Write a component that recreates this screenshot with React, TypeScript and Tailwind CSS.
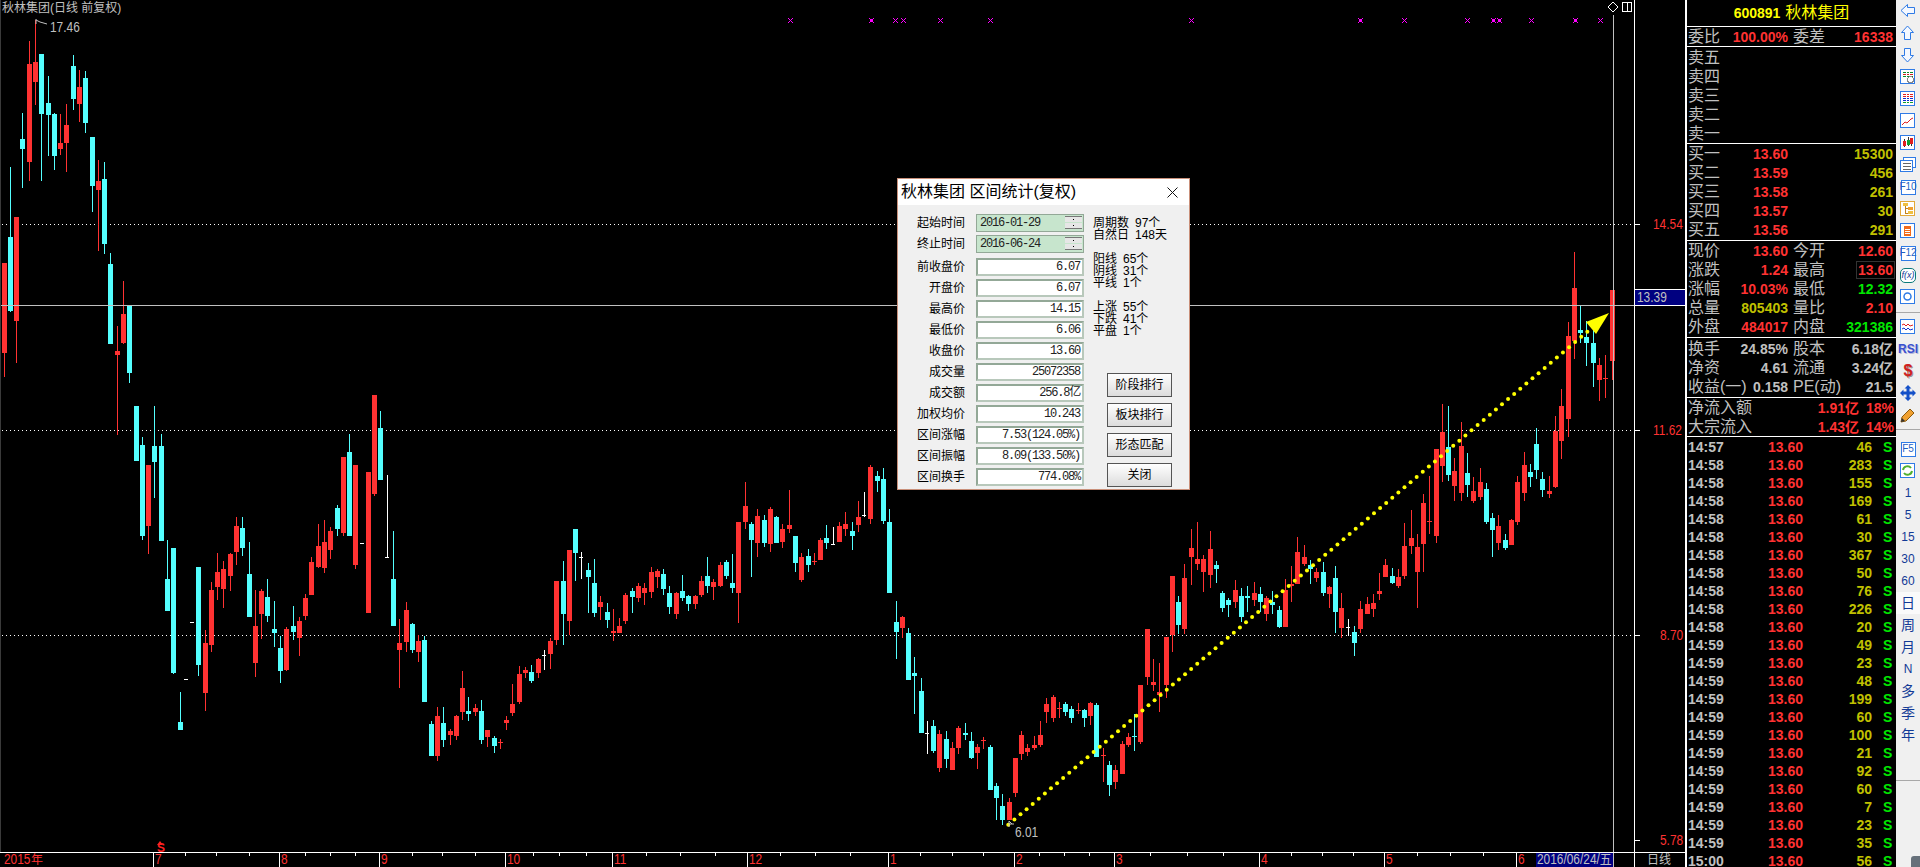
import React from 'react';

type Candle = [number, number, number, number, number, 'r' | 'c' | 'w'];

// x, body top, body bottom, wick top, wick bottom, colour
const CANDLES: Candle[] = [
  [2, 263, 353, 263, 377, 'r'], [8, 237, 311, 167, 312, 'c'], [14, 217, 321, 217, 363, 'r'], [20, 139, 149, 113, 188, 'c'],
  [27, 64, 162, 41, 181, 'r'], [33, 62, 82, 20, 105, 'r'], [39, 54, 114, 54, 181, 'c'], [46, 103, 115, 76, 156, 'c'],
  [52, 114, 156, 113, 170, 'c'], [58, 143, 149, 114, 155, 'r'], [64, 125, 143, 104, 172, 'r'], [71, 66, 99, 55, 110, 'c'],
  [77, 87, 104, 70, 122, 'r'], [83, 78, 123, 71, 133, 'c'], [90, 137, 186, 137, 212, 'c'], [96, 181, 190, 160, 251, 'r'],
  [102, 179, 244, 162, 254, 'c'], [108, 264, 344, 253, 344, 'c'], [115, 351, 355, 326, 435, 'r'], [121, 314, 343, 281, 344, 'r'],
  [127, 306, 373, 306, 383, 'c'], [134, 406, 461, 406, 461, 'c'], [140, 445, 536, 437, 540, 'c'], [146, 465, 526, 465, 554, 'r'],
  [152, 446, 462, 406, 498, 'c'], [159, 446, 541, 434, 541, 'c'], [165, 579, 611, 540, 611, 'c'], [171, 548, 673, 548, 674, 'c'],
  [178, 722, 730, 692, 730, 'c'], [184, 679, 679, 679, 679, 'w'], [190, 622, 622, 622, 622, 'w'], [196, 567, 665, 567, 676, 'c'],
  [203, 643, 693, 630, 711, 'r'], [209, 590, 645, 582, 652, 'r'], [215, 572, 587, 553, 600, 'r'], [221, 569, 589, 561, 608, 'r'],
  [228, 554, 576, 553, 591, 'r'], [234, 526, 552, 517, 565, 'r'], [240, 528, 548, 517, 556, 'c'], [247, 574, 617, 542, 617, 'c'],
  [253, 626, 663, 590, 677, 'r'], [259, 591, 614, 589, 639, 'r'], [265, 597, 616, 579, 622, 'c'], [272, 629, 633, 601, 647, 'c'],
  [278, 648, 671, 636, 683, 'c'], [284, 629, 670, 627, 671, 'r'], [291, 626, 632, 606, 640, 'c'], [297, 621, 638, 617, 656, 'r'],
  [303, 598, 616, 594, 620, 'r'], [309, 562, 595, 557, 595, 'r'], [316, 546, 567, 524, 568, 'r'], [322, 542, 568, 520, 573, 'r'],
  [328, 531, 550, 527, 559, 'r'], [335, 508, 529, 505, 536, 'c'], [341, 457, 533, 457, 536, 'r'], [347, 452, 536, 434, 536, 'c'],
  [353, 465, 565, 465, 569, 'r'], [360, 543, 543, 543, 543, 'w'], [366, 472, 613, 472, 613, 'r'], [372, 395, 494, 395, 496, 'r'],
  [378, 428, 480, 411, 480, 'c'], [385, 557, 557, 475, 557, 'w'], [391, 579, 626, 531, 626, 'c'], [397, 643, 650, 619, 688, 'r'],
  [404, 610, 642, 602, 652, 'r'], [410, 624, 650, 623, 653, 'c'], [416, 641, 652, 635, 662, 'r'], [422, 640, 702, 636, 702, 'c'],
  [429, 724, 756, 721, 756, 'c'], [435, 716, 756, 707, 761, 'r'], [441, 723, 740, 707, 747, 'c'], [448, 731, 735, 729, 745, 'r'],
  [454, 716, 736, 715, 740, 'r'], [460, 688, 712, 671, 720, 'r'], [466, 711, 714, 697, 721, 'c'], [473, 708, 712, 704, 716, 'r'],
  [479, 711, 740, 700, 744, 'c'], [485, 730, 737, 730, 747, 'r'], [492, 738, 746, 736, 753, 'c'], [498, 742, 742, 739, 749, 'r'],
  [504, 720, 723, 716, 730, 'r'], [510, 704, 713, 684, 716, 'r'], [517, 674, 702, 666, 704, 'r'], [523, 670, 673, 667, 678, 'r'],
  [529, 672, 681, 665, 683, 'c'], [536, 659, 673, 658, 678, 'r'], [542, 655, 655, 650, 670, 'w'], [548, 641, 654, 638, 669, 'r'],
  [554, 581, 640, 581, 645, 'r'], [561, 581, 614, 561, 645, 'c'], [567, 550, 621, 550, 635, 'r'], [573, 529, 553, 529, 581, 'c'],
  [579, 557, 557, 552, 579, 'w'], [586, 570, 577, 563, 613, 'c'], [592, 583, 613, 559, 617, 'c'], [598, 602, 607, 596, 620, 'r'],
  [605, 612, 620, 603, 628, 'c'], [611, 631, 633, 609, 641, 'r'], [617, 626, 633, 618, 633, 'r'], [623, 595, 621, 593, 624, 'r'],
  [630, 591, 597, 588, 613, 'c'], [636, 586, 598, 583, 602, 'r'], [642, 588, 593, 583, 605, 'r'], [649, 572, 592, 567, 598, 'r'],
  [655, 571, 577, 569, 588, 'r'], [661, 574, 589, 569, 595, 'c'], [667, 593, 607, 586, 614, 'c'], [674, 593, 614, 592, 619, 'r'],
  [680, 591, 598, 575, 601, 'c'], [686, 596, 604, 595, 611, 'c'], [693, 596, 604, 595, 609, 'r'], [699, 581, 595, 576, 597, 'r'],
  [705, 576, 586, 557, 593, 'c'], [711, 582, 587, 579, 600, 'r'], [718, 565, 586, 562, 587, 'r'], [724, 562, 576, 560, 579, 'c'],
  [730, 583, 588, 554, 593, 'c'], [736, 522, 593, 522, 623, 'r'], [743, 506, 522, 482, 529, 'r'], [749, 524, 540, 522, 577, 'c'],
  [755, 516, 543, 509, 557, 'r'], [762, 520, 543, 515, 547, 'c'], [768, 509, 544, 507, 552, 'r'], [774, 517, 543, 516, 543, 'c'],
  [780, 529, 542, 524, 548, 'r'], [787, 525, 529, 490, 533, 'r'], [793, 536, 563, 536, 572, 'c'], [799, 557, 580, 553, 582, 'r'],
  [806, 556, 565, 549, 572, 'c'], [812, 561, 561, 553, 565, 'r'], [818, 540, 560, 538, 560, 'r'], [824, 538, 543, 525, 549, 'c'],
  [831, 544, 544, 527, 544, 'w'], [837, 526, 542, 522, 542, 'r'], [843, 524, 529, 512, 536, 'r'], [850, 531, 536, 522, 550, 'c'],
  [856, 517, 525, 501, 532, 'r'], [862, 515, 515, 492, 517, 'w'], [868, 467, 519, 465, 524, 'r'], [875, 476, 481, 471, 492, 'c'],
  [881, 479, 521, 468, 524, 'c'], [887, 522, 593, 509, 593, 'c'], [894, 622, 632, 601, 659, 'c'], [900, 617, 628, 616, 638, 'r'],
  [906, 633, 680, 628, 680, 'c'], [912, 673, 676, 657, 714, 'c'], [919, 691, 733, 678, 733, 'c'], [925, 733, 733, 721, 754, 'w'],
  [931, 726, 751, 720, 753, 'c'], [937, 734, 768, 730, 772, 'r'], [944, 739, 759, 731, 768, 'c'], [950, 748, 770, 742, 770, 'r'],
  [956, 728, 748, 726, 754, 'r'], [963, 733, 735, 723, 740, 'c'], [969, 741, 758, 732, 759, 'c'], [975, 747, 753, 744, 769, 'r'],
  [981, 740, 740, 737, 749, 'r'], [988, 747, 790, 745, 790, 'c'], [994, 786, 798, 783, 820, 'c'], [1000, 806, 820, 794, 825, 'c'],
  [1007, 802, 820, 798, 820, 'r'], [1013, 758, 793, 758, 797, 'r'], [1019, 735, 754, 731, 760, 'r'], [1025, 748, 752, 744, 756, 'r'],
  [1032, 745, 748, 736, 750, 'r'], [1038, 735, 745, 721, 747, 'r'], [1044, 704, 712, 698, 723, 'r'], [1051, 697, 718, 695, 722, 'r'],
  [1057, 708, 708, 702, 718, 'r'], [1063, 704, 712, 702, 716, 'c'], [1069, 709, 718, 706, 723, 'c'], [1076, 710, 710, 703, 714, 'r'],
  [1082, 710, 718, 709, 727, 'c'], [1088, 703, 716, 702, 725, 'r'], [1094, 705, 757, 703, 757, 'c'], [1101, 755, 755, 748, 782, 'r'],
  [1107, 765, 785, 761, 796, 'c'], [1113, 770, 782, 765, 789, 'r'], [1120, 744, 774, 741, 774, 'r'], [1126, 737, 745, 733, 747, 'r'],
  [1132, 736, 736, 714, 751, 'c'], [1138, 685, 742, 685, 744, 'r'], [1145, 629, 677, 629, 685, 'r'], [1151, 682, 685, 659, 691, 'r'],
  [1157, 692, 695, 663, 712, 'r'], [1164, 637, 685, 637, 698, 'r'], [1170, 576, 635, 576, 652, 'r'], [1176, 602, 625, 596, 634, 'c'],
  [1182, 578, 629, 564, 634, 'r'], [1189, 548, 557, 529, 585, 'r'], [1195, 559, 564, 522, 570, 'r'], [1201, 559, 572, 555, 592, 'r'],
  [1208, 549, 575, 531, 588, 'r'], [1214, 565, 569, 561, 583, 'c'], [1220, 593, 608, 591, 612, 'c'], [1226, 600, 605, 598, 617, 'c'],
  [1233, 590, 602, 580, 608, 'r'], [1239, 596, 617, 588, 622, 'c'], [1245, 596, 598, 586, 612, 'c'], [1252, 593, 600, 582, 606, 'r'],
  [1258, 594, 602, 587, 612, 'c'], [1264, 598, 614, 596, 621, 'r'], [1270, 602, 605, 591, 614, 'c'], [1277, 610, 627, 606, 628, 'c'],
  [1283, 590, 627, 579, 627, 'r'], [1289, 584, 586, 566, 602, 'r'], [1295, 552, 584, 537, 584, 'r'], [1302, 557, 564, 545, 566, 'r'],
  [1308, 565, 569, 560, 584, 'c'], [1314, 572, 578, 568, 582, 'r'], [1321, 572, 593, 562, 596, 'c'], [1327, 587, 594, 586, 608, 'r'],
  [1333, 578, 612, 566, 633, 'c'], [1339, 608, 628, 593, 638, 'r'], [1346, 627, 627, 619, 636, 'w'], [1352, 632, 643, 626, 656, 'c'],
  [1358, 609, 629, 601, 633, 'r'], [1365, 604, 614, 597, 614, 'r'], [1371, 603, 609, 594, 617, 'r'], [1377, 591, 594, 573, 600, 'r'],
  [1383, 565, 577, 559, 577, 'r'], [1390, 576, 583, 568, 584, 'c'], [1396, 577, 586, 569, 588, 'r'], [1402, 546, 576, 523, 579, 'r'],
  [1409, 538, 546, 510, 554, 'r'], [1415, 547, 572, 534, 608, 'r'], [1421, 503, 544, 494, 572, 'r'], [1427, 521, 521, 476, 534, 'r'],
  [1434, 449, 536, 449, 543, 'r'], [1440, 432, 466, 404, 482, 'r'], [1446, 447, 475, 406, 481, 'c'], [1452, 471, 486, 458, 501, 'r'],
  [1459, 446, 493, 422, 501, 'r'], [1465, 473, 485, 453, 497, 'c'], [1471, 491, 501, 477, 503, 'r'], [1478, 482, 497, 468, 500, 'r'],
  [1484, 489, 522, 483, 524, 'c'], [1490, 518, 530, 513, 557, 'c'], [1496, 526, 543, 515, 550, 'r'], [1503, 540, 548, 534, 550, 'c'],
  [1509, 520, 545, 519, 545, 'r'], [1515, 482, 522, 476, 525, 'r'], [1522, 465, 493, 452, 501, 'r'], [1528, 472, 477, 464, 487, 'c'],
  [1534, 444, 470, 428, 479, 'c'], [1540, 479, 490, 472, 497, 'c'], [1547, 491, 494, 476, 498, 'r'], [1553, 431, 487, 416, 488, 'r'],
  [1559, 406, 441, 389, 459, 'r'], [1566, 336, 419, 322, 437, 'r'], [1572, 288, 341, 252, 359, 'r'], [1578, 330, 333, 306, 343, 'c'],
  [1584, 337, 343, 321, 366, 'c'], [1591, 343, 363, 330, 387, 'c'], [1597, 365, 380, 358, 401, 'r'], [1603, 378, 378, 355, 398, 'r'],
  [1610, 290, 361, 290, 380, 'r'],
];

const COLORS = { r: '#ff3232', c: '#54ffff', w: '#ffffff' };
const MARKS = [790, 871, 895, 903, 940, 990, 1191, 1360, 1404, 1467, 1493, 1499, 1531, 1575, 1600];
const SOLID_MARKS = [871, 1360, 1493, 1499, 1575];
const MONTHS: [number, string][] = [[153, '7'], [279, '8'], [379, '9'], [505, '10'], [612, '11'], [747, '12'], [888, '1'], [1014, '2'], [1114, '3'], [1259, '4'], [1384, '5'], [1516, '6']];
const TICKS = [185, 216, 249, 305, 330, 355, 412, 442, 475, 533, 559, 586, 646, 680, 715, 780, 815, 850, 920, 952, 983, 1039, 1064, 1089, 1150, 1187, 1223, 1291, 1322, 1353, 1417, 1450, 1483];
const PRICES: [number, string][] = [[224, '14.54'], [430, '11.62'], [635, '8.70'], [840, '5.78']];

const narrow = (x: number, y: number) => `translate(${x} ${y}) scale(.85 1)`;

function Chart() {
  const dots = Array.from({ length: 96 }, (_, i) => [1008.3 + i * 6.095, 824.7 - i * 5.19]);
  return (
    <svg width="1685" height="867" viewBox="0 0 1685 867" className="block">
      <g shapeRendering="crispEdges">
        {[224, 430, 635].map((y) => (
          <line key={y} x1="2" x2="1634" y1={y + 0.5} y2={y + 0.5} stroke="#fff" strokeDasharray="1 3" />
        ))}
        {CANDLES.map(([x, t, b, wt, wb, k]) => (
          <g key={x} fill={COLORS[k]}>
            <rect x={x + 2} y={wt} width="1" height={Math.max(1, wb - wt)} />
            <rect x={x} y={t} width={k === 'w' ? 4 : 5} height={Math.max(1, b - t)} />
          </g>
        ))}
        <rect x="0" y="0" width="1" height="852" fill="#3a3a3a" />
        <rect x="1" y="305" width="1633" height="1" fill="#c0c0c0" />
        <rect x="1613" y="15" width="1" height="852" fill="#c0c0c0" />
        {MARKS.map((x) => (
          <path key={x} d={`M${x - 2} 18h1v1h-1zM${x + 2} 18h1v1h-1zM${x - 2} 22h1v1h-1zM${x + 2} 22h1v1h-1z`} fill="#ff00ff" />
        ))}
        {MARKS.map((x) => (
          SOLID_MARKS.includes(x)
            ? <rect key={x} x={x - 1} y="19" width="3" height="3" fill="#ff00ff" />
            : <path key={x} d={`M${x - 1} 19h1v1h-1zM${x + 1} 19h1v1h-1zM${x} 20h1v1h-1zM${x - 1} 21h1v1h-1zM${x + 1} 21h1v1h-1z`} fill="#ff00ff" />
        ))}
        <rect x="1634" y="0" width="1" height="867" fill="#fff" />
        <rect x="0" y="852" width="1685" height="1" fill="#fff" />
        {[224, 430, 635, 840].map((y) => (
          <rect key={y} x="1635" y={y} width="5" height="1" fill="#fff" />
        ))}
        {TICKS.map((x) => (
          <rect key={x} x={x} y="853" width="1" height="3" fill="#fff" />
        ))}
        {MONTHS.map(([x]) => (
          <rect key={x} x={x} y="853" width="1" height="14" fill="#fff" />
        ))}
        <rect x="1635" y="289" width="50" height="1" fill="#fff" />
        <rect x="1635" y="290" width="50" height="15" fill="#000080" />
        <rect x="1635" y="305" width="50" height="1" fill="#fff" />
        <rect x="1536" y="853" width="77" height="14" fill="#000080" />
        <rect x="1622.5" y="2.5" width="9" height="9" fill="none" stroke="#fff" />
        <rect x="1627" y="3" width="1" height="8" fill="#fff" />
      </g>

      <polygon points="1613,2 1618,7 1613,12 1608,7" fill="none" stroke="#fff" />
      {dots.map(([x, y]) => (
        <circle key={x} cx={x} cy={y} r="2" fill="#ffff00" />
      ))}
      <polygon points="1609,313 1586,322 1596,334" fill="#ffff00" />
      <path d="M36 19v5M36 20l4 2 7 2M1012 824l-3-3v6M1009 824h5" fill="none" stroke="#c0c0c0" />

      <g fontSize="14" fontFamily="'Liberation Sans', 'Noto Sans CJK SC', sans-serif">
        <text transform={narrow(50, 32)} fill="#c0c0c0">17.46</text>
        <text transform={narrow(1015, 837)} fill="#c0c0c0">6.01</text>
        <text transform={narrow(1637, 302)} fill="#c0c0c0">13.39</text>
        {PRICES.map(([y, p]) => (
          <text key={p} transform={narrow(p.length === 5 ? 1653 : 1660, y + 5)} fill="#ff3232">{p}</text>
        ))}
        <text transform={narrow(4, 864)} fill="#ff3232">2015</text>
        <text x="31" y="864" fontSize="12" fill="#ff3232">年</text>
        {MONTHS.map(([x, m]) => (
          <text key={x} transform={narrow(x + 2, 864)} fill="#ff3232">{m}</text>
        ))}
        <text transform={narrow(1537, 864)} fill="#c0c0c0">2016/06/24/五</text>
        <text x="1647" y="864" fontSize="12" fill="#c0c0c0">日线</text>
        <text x="157" y="852" fontSize="12" fontWeight="700" fill="#ff2020">S</text>
      </g>
      <polygon points="160,841 163,845 157,845" fill="#ff2020" />
    </svg>
  );
}

function Row({ a, v, vc = 'text-[#ff3232]', b, w, wc = 'text-[#ff3232]', boxed }: { a: string; v?: string; vc?: string; b?: string; w?: string; wc?: string; boxed?: boolean }) {
  return (
    <div className="flex h-[19px] items-center pl-[1px] pr-[3px] whitespace-nowrap">
      <span className="w-[36px] text-base text-[#c0c0c0]">{a}</span>
      <span className={`w-[64px] text-right text-sm font-bold ${vc}`}>{v}</span>
      <span className="ml-[5px] w-[36px] text-base text-[#c0c0c0]">{b}</span>
      <span className={`flex-1 text-right text-sm font-bold ${wc}`}>
        {boxed ? <span className="-mr-[2px] inline-block border border-[#333] px-[1px] leading-[16px]">{w}</span> : w}
      </span>
    </div>
  );
}

const TRADES: [string, number][] = [
  ['14:57', 46], ['14:58', 283], ['14:58', 155], ['14:58', 169], ['14:58', 61], ['14:58', 30], ['14:58', 367], ['14:58', 50],
  ['14:58', 76], ['14:58', 226], ['14:58', 20], ['14:59', 49], ['14:59', 23], ['14:59', 48], ['14:59', 199], ['14:59', 60],
  ['14:59', 100], ['14:59', 21], ['14:59', 92], ['14:59', 60], ['14:59', 7], ['14:59', 23], ['14:59', 35], ['15:00', 56],
];

function Quote() {
  const gold = 'text-[#c0c000]';
  const gray = 'text-[#c0c0c0]';
  const green = 'text-[#00e600]';
  return (
    <div className="h-full w-[211px] shrink-0 border-l-2 border-white">
      <div className="flex h-[27px] items-center justify-center gap-[5px] border-b border-white text-[#ffff00]">
        <span className="text-sm font-bold">600891</span>
        <span className="text-base">秋林集团</span>
      </div>
      <div className="h-[20px] border-b border-white">
        <Row a="委比" v="100.00%" b="委差" w="16338" />
      </div>
      <div className="h-[97px] border-b border-white pt-[1px]">
        {['卖五', '卖四', '卖三', '卖二', '卖一'].map((l) => (
          <Row key={l} a={l} />
        ))}
      </div>
      <div className="h-[97px] border-b border-white">
        <Row a="买一" v="13.60" w="15300" wc={gold} />
        <Row a="买二" v="13.59" w="456" wc={gold} />
        <Row a="买三" v="13.58" w="261" wc={gold} />
        <Row a="买四" v="13.57" w="30" wc={gold} />
        <Row a="买五" v="13.56" w="291" wc={gold} />
      </div>
      <div className="h-[97px] border-b border-white">
        <Row a="现价" v="13.60" b="今开" w="12.60" />
        <Row a="涨跌" v="1.24" b="最高" w="13.60" boxed />
        <Row a="涨幅" v="10.03%" b="最低" w="12.32" wc={green} />
        <Row a="总量" v="805403" vc={gold} b="量比" w="2.10" />
        <Row a="外盘" v="484017" b="内盘" w="321386" wc={green} />
      </div>
      <div className="h-[60px] border-b border-white pt-[1px]">
        <Row a="换手" v="24.85%" vc={gray} b="股本" w="6.18亿" wc={gray} />
        <Row a="净资" v="4.61" vc={gray} b="流通" w="3.24亿" wc={gray} />
        <Row a="收益(一)" v="0.158" vc={gray} b="PE(动)" w="21.5" wc={gray} />
      </div>
      <div className="h-[39px] border-b border-white">
        {[['净流入额', '1.91亿', '18%'], ['大宗流入', '1.43亿', '14%']].map(([l, v, p]) => (
          <div key={l} className="flex h-[19px] items-center pl-[1px] pr-[2px] whitespace-nowrap">
            <span className="w-[80px] text-base text-[#c0c0c0]">{l}</span>
            <span className="w-[91px] text-right text-sm font-bold text-[#ff3232]">{v}</span>
            <span className="flex-1 text-right text-sm font-bold text-[#ff3232]">{p}</span>
          </div>
        ))}
      </div>
      <div className="pt-[1px]">
        {TRADES.map(([t, n], i) => (
          <div key={i} className="flex h-[18px] items-center pl-[1px] text-sm leading-[12px] font-bold">
            <span className="w-[60px] text-[#c0c0c0]">{t}</span>
            <span className="w-[55px] text-right text-[#ff3232]">13.60</span>
            <span className="w-[69px] text-right text-[#c0c000]">{n}</span>
            <span className="ml-[11px] text-[#00e600]">S</span>
          </div>
        ))}
      </div>
    </div>
  );
}

const BLUE = '#2f7be6';

function Box({ children, c = BLUE }: { children: React.ReactNode; c?: string }) {
  return (
    <svg width="16" height="16" viewBox="0 0 16 16" shapeRendering="crispEdges">
      <rect x="0.5" y="0.5" width="14" height="14" fill="#fff" stroke={c} />
      {children}
    </svg>
  );
}

function TextBox({ t }: { t: string }) {
  return (
    <span className="flex h-[15px] w-[15px] items-center justify-center border border-[#2f7be6] bg-white text-[10px] leading-none text-[#1f5fc4]">{t}</span>
  );
}

const Bars = ({ colors }: { colors: string[] }) => (
  <>
    {colors.map((c, i) => (
      <g key={i} fill={c}>
        <rect x="3" y={3 + i * 2} width="3" height="1" />
        <rect x="7" y={3 + i * 2} width="2" height="1" />
        <rect x="10" y={3 + i * 2} width="3" height="1" />
      </g>
    ))}
  </>
);

function Toolbar() {
  const arrow = (points: string) => (
    <svg width="16" height="16" viewBox="0 0 16 16">
      <polygon points={points} fill="#f4f8ff" stroke={BLUE} />
    </svg>
  );
  const Item = ({ children, active }: { children: React.ReactNode; active?: boolean }) => (
    <div className={`flex h-[22px] items-center justify-center ${active ? 'bg-[#fafafa]' : ''}`}>{children}</div>
  );
  const Num = ({ t }: { t: string }) => <span className="text-xs text-[#123a96]">{t}</span>;
  const Cjk = ({ t }: { t: string }) => <span className="text-sm leading-none text-[#123a96]">{t}</span>;
  return (
    <div className="relative flex h-full w-[24px] shrink-0 flex-col bg-[#f0f0f0]">
      <Item>{arrow('1,7.5 7.5,1.5 7.5,4.5 14.5,4.5 14.5,10.5 7.5,10.5 7.5,13.5')}</Item>
      <Item>{arrow('7.5,1 13.5,7.5 10.5,7.5 10.5,14.5 4.5,14.5 4.5,7.5 1.5,7.5')}</Item>
      <Item>{arrow('7.5,15 13.5,8.5 10.5,8.5 10.5,1.5 4.5,1.5 4.5,8.5 1.5,8.5')}</Item>
      <Item>
        <Box>
          <Bars colors={['#0a8a2a', '#d02020', '#0a8a2a']} />
          <circle cx="10.5" cy="10.5" r="3" fill="#fff" stroke="#888" />
        </Box>
      </Item>
      <Item><Box><Bars colors={['#e02020', '#e02020', '#1030d0', '#1030d0', '#10a030']} /></Box></Item>
      <Item>
        <Box><path d="M2 12l3-3 2 1 4-4 2-1" fill="none" stroke="#e02020" shapeRendering="auto" /></Box>
      </Item>
      <Item>
        <Box>
          <path d="M4 4v8M8 2v9M11 3v8" stroke="#333" />
          <rect x="3" y="6" width="3" height="5" fill="#e02020" />
          <rect x="7" y="5" width="3" height="5" fill="#10a030" />
          <rect x="10" y="3" width="3" height="6" fill="#e02020" />
        </Box>
      </Item>
      <Item>
        <svg width="16" height="16" viewBox="0 0 16 16" shapeRendering="crispEdges">
          <rect x="3.5" y="0.5" width="12" height="10" fill="#fff" stroke={BLUE} />
          <rect x="0.5" y="3.5" width="12" height="11" fill="#fff" stroke={BLUE} />
          <path d="M3 6.5h8M3 9.5h8M3 12.5h8" stroke="#666" />
        </svg>
      </Item>
      <Item><TextBox t="F10" /></Item>
      <Item>
        <Box c="#e2a93a">
          <rect x="3" y="2" width="5" height="3" fill="#f0c040" />
          <rect x="8" y="6" width="5" height="3" fill="#f0a030" />
          <rect x="8" y="10" width="5" height="3" fill="#f0c040" />
          <path d="M5 5v7h3M5 7.5h3" fill="none" stroke="#c08020" />
        </Box>
      </Item>
      <Item>
        <Box>
          <rect x="4" y="3" width="7" height="10" fill="#f26a1b" />
          <path d="M5 6h5M5 8h5M5 10h5M7 2h1" stroke="#fff" />
        </Box>
      </Item>
      <Item><TextBox t="F12" /></Item>
      <Item>
        <span className="flex h-[15px] w-[16px] items-center justify-center rounded-[5px] border border-[#0a7a7a] bg-white text-[9px] italic leading-none text-[#123a96]">f(x)</span>
      </Item>
      <Item>
        <Box><circle cx="7.5" cy="7.5" r="3.5" fill="none" stroke={BLUE} strokeWidth="1.5" shapeRendering="auto" /></Box>
      </Item>
      <div className="flex h-[8px] shrink-0 items-center"><div className="h-[1px] w-full bg-[#a8a8a8]" /></div>
      <Item>
        <Box>
          <path d="M2 6l2-1 2 2 2-2 2 2 3-1" fill="none" stroke="#e02020" shapeRendering="auto" />
          <path d="M2 10l2-1 2 2 2-2 2 2 3-1" fill="none" stroke="#1030d0" shapeRendering="auto" />
        </Box>
      </Item>
      <Item><span className="text-xs font-bold leading-none text-[#3a50d0] [text-shadow:1px_1px_0_#b8b8d8]">RSI</span></Item>
      <Item><span className="text-base font-bold leading-none text-[#d02020] [text-shadow:1px_1px_0_#999]">$</span></Item>
      <Item>
        <svg width="16" height="16" viewBox="0 0 16 16">
          <path d="M8 0l3.5 3.5h-2v3h3v-2L16 8l-3.5 3.5v-2h-3v3h2L8 16l-3.5-3.5h2v-3h-3v2L0 8l3.5-3.5v2h3v-3h-2z" fill="#1450c8" />
        </svg>
      </Item>
      <Item>
        <svg width="16" height="16" viewBox="0 0 16 16">
          <path d="M1 15l1-5 8-8 4 4-8 8z" fill="#f0a030" stroke="#8a5a10" />
          <path d="M1 15l1-4 3 3z" fill="#333" />
        </svg>
      </Item>
      <div className="mt-[3px] h-[1px] shrink-0 bg-[#a8a8a8]" />
      <div className="h-[8px] shrink-0" />
      <Item><TextBox t="F5" /></Item>
      <Item>
        <Box>
          <path d="M3 7a4.5 4.5 0 0 1 8-2M12 8a4.5 4.5 0 0 1-8 2" fill="none" stroke="#50b030" strokeWidth="2" shapeRendering="auto" />
        </Box>
      </Item>
      {['1', '5', '15', '30', '60'].map((t) => (
        <Item key={t}><Num t={t} /></Item>
      ))}
      <Item active><Cjk t="日" /></Item>
      {['周', '月'].map((t) => (
        <Item key={t}><Cjk t={t} /></Item>
      ))}
      <Item><Num t="N" /></Item>
      {['多', '季', '年'].map((t) => (
        <Item key={t}><Cjk t={t} /></Item>
      ))}
      <div className="mt-[34px] h-[1px] shrink-0 bg-[#a8a8a8]" />
      <div className="absolute bottom-0 right-0 h-[11px] w-[9px] rounded-tl-[3px] bg-[#66707a]" />
    </div>
  );
}

function Field({ label, value }: { label: string; value: string }) {
  return (
    <div className="flex h-[18px] items-center">
      <span className="w-[67px] text-right text-xs text-black">{label}</span>
      <span className="ml-[11px] flex h-full w-[108px] items-center justify-end border-2 border-[#93a897] border-b-[#b8c8bb] border-r-[#b8c8bb] bg-white pr-[2px] font-['Liberation_Mono','Noto_Sans_CJK_SC',monospace] text-xs tracking-[-1.2px] text-[#222]">{value}</span>
    </div>
  );
}

function DateField({ label, value }: { label: string; value: string }) {
  return (
    <div className="flex h-[18px] items-center">
      <span className="w-[67px] text-right text-xs text-black">{label}</span>
      <span className="ml-[11px] flex h-full w-[108px] items-center border border-[#93a897] bg-[#c7e5cd] pl-[3px] font-['Liberation_Mono',monospace] text-xs tracking-[-1.2px] text-[#222]">
        {value}
        <span className="ml-auto mr-[1px] flex h-[14px] w-[17px] flex-col gap-[1px]">
          <span className="flex h-[6px] items-center justify-center border-t border-[#777] bg-[#e6e6e6]"><i className="h-[1px] w-[1px] bg-black" /></span>
          <span className="flex h-[6px] items-center justify-center border-b border-[#777] bg-[#e6e6e6]"><i className="h-[1px] w-[1px] bg-black" /></span>
        </span>
      </span>
    </div>
  );
}

const Stat = ({ a, b, wide }: { a: string; b: string; wide?: boolean }) => (
  <div className="flex h-[12px] items-center text-xs leading-none whitespace-nowrap text-black">
    <span className={wide ? 'w-[42px]' : 'w-[30px]'}>{a}</span>
    <span>{b}</span>
  </div>
);

const Btn = ({ t }: { t: string }) => (
  <button className="h-[24px] w-[65px] border border-[#555] bg-gradient-to-b from-white to-[#dcdcdc] text-xs text-black">{t}</button>
);

function Dialog() {
  return (
    <div className="absolute left-[897px] top-[178px] h-[312px] w-[293px] border border-[#c9907a] bg-[#f0f0f0]">
      <div className="flex h-[26px] items-center justify-between bg-white pl-[3px] pr-[11px]">
        <span className="text-base text-black">秋林集团 区间统计(复权)</span>
        <svg width="11" height="11" viewBox="0 0 11 11"><path d="M0.5 0.5l10 10M10.5 0.5l-10 10" stroke="#111" /></svg>
      </div>
      <div className="flex pt-[9px]">
        <div className="flex w-[195px] flex-col gap-[3px]">
          <DateField label="起始时间" value="2016-01-29" />
          <div className="mb-[2px]"><DateField label="终止时间" value="2016-06-24" /></div>
          <Field label="前收盘价" value="6.07" />
          <Field label="开盘价" value="6.07" />
          <Field label="最高价" value="14.15" />
          <Field label="最低价" value="6.06" />
          <Field label="收盘价" value="13.60" />
          <Field label="成交量" value="25072358" />
          <Field label="成交额" value="256.8亿" />
          <Field label="加权均价" value="10.243" />
          <Field label="区间涨幅" value="7.53(124.05%)" />
          <Field label="区间振幅" value="8.09(133.50%)" />
          <Field label="区间换手" value="774.08%" />
        </div>
        <div className="pt-[3px]">
          <Stat a="周期数" b="97个" wide />
          <Stat a="自然日" b="148天" wide />
          <div className="mt-[12px]">
            <Stat a="阳线" b="65个" />
            <Stat a="阴线" b="31个" />
            <Stat a="平线" b="1个" />
          </div>
          <div className="mt-[12px]">
            <Stat a="上涨" b="55个" />
            <Stat a="下跌" b="41个" />
            <Stat a="平盘" b="1个" />
          </div>
          <div className="ml-[14px] mt-[36px] flex flex-col gap-[6px]">
            <Btn t="阶段排行" />
            <Btn t="板块排行" />
            <Btn t="形态匹配" />
            <Btn t="关闭" />
          </div>
        </div>
      </div>
    </div>
  );
}

export default function App() {
  return (
    <div lang="zh-CN" className="relative flex h-[867px] w-[1920px] overflow-hidden bg-black font-['Liberation_Sans','Noto_Sans_CJK_SC',sans-serif]">
      <div className="relative w-[1685px] shrink-0">
        <div className="absolute left-[2px] top-[1px] text-xs leading-[14px] text-[#c0c0c0]">秋林集团(日线 前复权)</div>
        <Chart />
      </div>
      <Quote />
      <Toolbar />
      <Dialog />
    </div>
  );
}
